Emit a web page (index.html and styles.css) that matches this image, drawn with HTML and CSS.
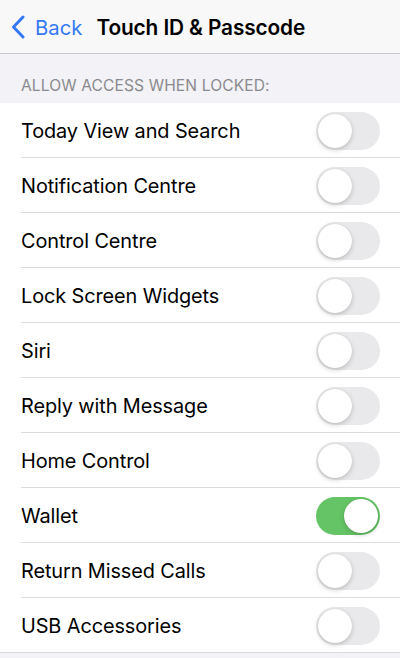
FILE: index.html
```html
<!DOCTYPE html>
<html lang="en">
    <head>
        <meta charset="UTF-8">
        <meta name="viewport" content="width=device-width, initial-scale=1.0">
        <title>Touch ID &amp; Passcode</title>
        <link rel="stylesheet" href="styles.css">
    </head>
    <body>
        <div id="navbar">
            <a class="back" href="#">
                <svg class="chevron" width="14" height="24" viewBox="0 0 14 24">
                    <path d="M12 2 L2.5 12 L12 22" fill="none" stroke="#3478f6" stroke-width="3" stroke-linecap="round" stroke-linejoin="round"/>
                </svg>
                <span>Back</span>
            </a>
            <div class="title">Touch ID &amp; Passcode</div>
        </div>
        <div class="section_header">ALLOW ACCESS WHEN LOCKED:</div>
        <ul id="settings">
            <li><span>Today View and Search</span><div class="toggle"></div></li>
            <li><span>Notification Centre</span><div class="toggle"></div></li>
            <li><span>Control Centre</span><div class="toggle"></div></li>
            <li><span>Lock Screen Widgets</span><div class="toggle"></div></li>
            <li><span>Siri</span><div class="toggle"></div></li>
            <li><span>Reply with Message</span><div class="toggle"></div></li>
            <li><span>Home Control</span><div class="toggle"></div></li>
            <li><span>Wallet</span><div class="toggle on"></div></li>
            <li><span>Return Missed Calls</span><div class="toggle"></div></li>
            <li><span>USB Accessories</span><div class="toggle"></div></li>
        </ul>
    </body>
</html>
```
FILE: styles.css
```css
body{
    margin:0;
    background:#f2f2f7;
    font-family: Inter, "Noto Sans", sans-serif;
    color:#000;
}
#navbar{
    height:54px;
    background:#f8f8f8;
    border-bottom:1px solid #c8c8c8;
    display:flex;
    align-items:center;
    padding-left:11px;
    padding-top:1px;
    box-sizing:border-box;
    gap:14px;
}
.back{
    display:flex;
    align-items:center;
    gap:10px;
    color:#3478f6;
    text-decoration:none;
    font-size:20.3px;
}
.title{
    font-size:20.8px;
    font-weight:600;
    letter-spacing:-0.1px;
}
.section_header{
    height:49px;
    box-sizing:border-box;
    padding:0 21px 8px;
    display:flex;
    align-items:flex-end;
    font-size:15.6px;
    color:#8a8a8e;
    letter-spacing:0.1px;
}
#settings{
    list-style:none;
    margin:0;
    padding:0 0 0 21px;
    background:#fff;
    border-bottom:1px solid #d9d9d9;
}
#settings li{
    height:54px;
    display:flex;
    align-items:center;
    justify-content:space-between;
    padding-right:20px;
    padding-top:1px;
    box-sizing:border-box;
    height:55px;
    border-bottom:1px solid #dcdcdc;
    font-size:19.9px;
    letter-spacing:-0.1px;
}
#settings li:last-child{
    border-bottom:none;
    height:54px;
}
.toggle{
    width:64px;
    height:38px;
    border-radius:19px;
    background:#e9e9eb;
    position:relative;
    flex-shrink:0;
}
.toggle::after{
    content:"";
    position:absolute;
    top:2px;
    left:2px;
    width:34px;
    height:34px;
    border-radius:50%;
    background:#fff;
    box-shadow:0 2px 5px rgba(0,0,0,0.18), 0 0 1px rgba(0,0,0,0.15);
}
.toggle.on{
    background:#65c466;
}
.toggle.on::after{
    left:28px;
}
```
